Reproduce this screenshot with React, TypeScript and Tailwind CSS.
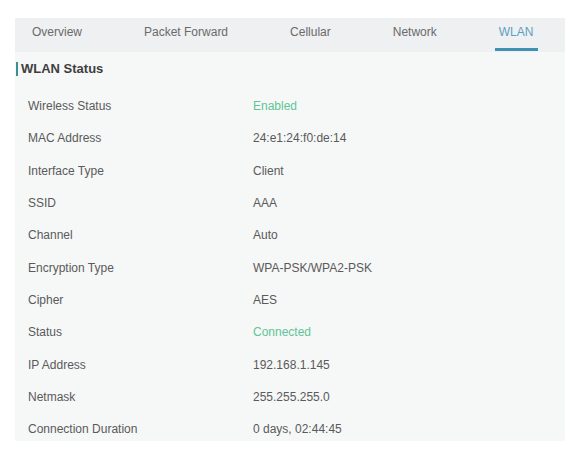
const tabs = ['Overview', 'Packet Forward', 'Cellular', 'Network', 'WLAN'];

const rows: [string, string, boolean?][] = [
  ['Wireless Status', 'Enabled', true],
  ['MAC Address', '24:e1:24:f0:de:14'],
  ['Interface Type', 'Client'],
  ['SSID', 'AAA'],
  ['Channel', 'Auto'],
  ['Encryption Type', 'WPA-PSK/WPA2-PSK'],
  ['Cipher', 'AES'],
  ['Status', 'Connected', true],
  ['IP Address', '192.168.1.145'],
  ['Netmask', '255.255.255.0'],
  ['Connection Duration', '0 days, 02:44:45'],
];

const App = () => (
  <div className="h-[449px] w-[581px] overflow-hidden bg-white pt-[18px] pl-[15px] font-['Liberation_Sans',Arial,sans-serif] text-[12px] text-[#5a5a5a]">
    <div className="h-[423px] w-[550px] overflow-hidden bg-[#f6f7f7]">
      <nav className="flex h-[34px] gap-[62px] bg-[#eef0f1] pl-[17px]">
        {tabs.map((t) => (
          <div
            key={t}
            className={
              t === 'WLAN'
                ? 'relative flex items-center pb-[7px] text-[#5d9fc2]'
                : 'relative flex items-center pb-[7px] text-[#6a6a6a]'
            }
          >
            {t}
            {t === 'WLAN' && (
              <span className="absolute -right-[5px] bottom-[1px] -left-[4px] h-[3px] bg-[#3f90b3]" />
            )}
          </div>
        ))}
      </nav>
      <h2 className="mt-[9px] ml-px flex h-[16px] items-center gap-[3px] text-[13px] font-bold text-[#3e3e3e]">
        <span className="h-[14px] w-[2px] bg-[#3a9090]" />
        WLAN Status
      </h2>
      <div className="mt-[13px]">
        {rows.map(([label, value, green]) => (
          <div key={label} className="flex h-[32.3px] items-center">
            <span className="w-[238px] pl-[13px]">{label}</span>
            <span className={green ? 'text-[#5fc598]' : ''}>{value}</span>
          </div>
        ))}
      </div>
    </div>
  </div>
);

export default App;
